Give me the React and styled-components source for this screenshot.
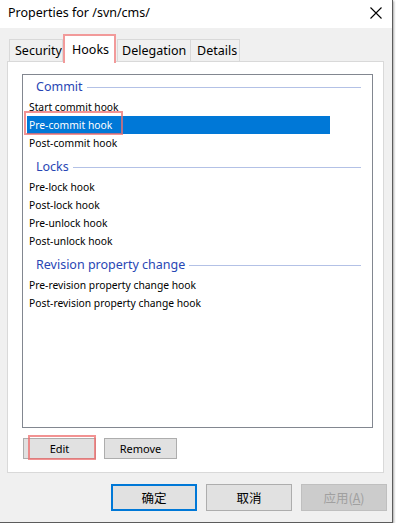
import React from 'react';
import styled, { createGlobalStyle } from 'styled-components';

const GlobalStyles = createGlobalStyle`
  html, body {
    margin: 0;
    padding: 0;
    background: #ffffff;
  }
  body {
    font-family: "Noto Sans", "Noto Sans CJK SC", sans-serif;
    color: #000;
  }
`;

const groups = [
  { title: 'Commit', items: ['Start commit hook', 'Pre-commit hook', 'Post-commit hook'] },
  { title: 'Locks', items: ['Pre-lock hook', 'Post-lock hook', 'Pre-unlock hook', 'Post-unlock hook'] },
  {
    title: 'Revision property change',
    items: ['Pre-revision property change hook', 'Post-revision property change hook'],
  },
];

// width, left offset and text inset of each tab (tabs overlap their neighbours a little)
const tabs = [
  { label: 'Security', w: 54, ml: 0, pl: 5 },
  { label: 'Hooks', w: 53, ml: 0, pl: 7, active: true },
  { label: 'Delegation', w: 74, ml: 1, pl: 4 },
  { label: 'Details', w: 50, ml: -1, pl: 6 },
];

export default function App() {
  return (
    <>
      <GlobalStyles />
      <Window>
        <TitleBar>
          <Title>Properties for /svn/cms/</Title>
          <Close>
            <svg width="12" height="12" viewBox="0 0 12 12">
              <path d="M0.5 0.5 L11.5 11.5 M11.5 0.5 L0.5 11.5" stroke="#000" strokeWidth="1.1" />
            </svg>
          </Close>
        </TitleBar>
        <Body>
          <TabRow>
            {tabs.map(t => (
              <Tab key={t.label} $active={t.active} $w={t.w} $ml={t.ml} $pl={t.pl}>{t.label}</Tab>
            ))}
          </TabRow>
          <Panel>
            <ListBox>
              {groups.map(g => (
                <Group key={g.title}>
                  <GroupHeader>
                    <span>{g.title}</span>
                    <HeaderLine />
                  </GroupHeader>
                  {g.items.map(item => (
                    <Row key={item} $selected={item === 'Pre-commit hook'}>
                      {item}
                      {item === 'Pre-commit hook' && <Mark $l={-3} $t={-5} $w={99} $h={24} />}
                    </Row>
                  ))}
                </Group>
              ))}
            </ListBox>
            <ButtonRow>
              <SmallButton>
                Edit
                <Mark $l={4} $t={-4} $w={68} $h={25} />
              </SmallButton>
              <SmallButton>Remove</SmallButton>
            </ButtonRow>
          </Panel>
          <Footer>
            <DialogButton $default>确定</DialogButton>
            <DialogButton>取消</DialogButton>
            <DialogButton $disabled>
              应用(<u>A</u>)
            </DialogButton>
          </Footer>
        </Body>
      </Window>
    </>
  );
}

const Window = styled.div`
  width: 392px;
  height: 522px;
  background: #f0f0f0;
  border-right: 1px solid #5c5c5c;
  border-bottom: 1px solid #5c5c5c;
  box-shadow: 1px 1px 2px rgba(0, 0, 0, 0.35);
  display: flex;
  flex-direction: column;
`;

const TitleBar = styled.div`
  height: 28px;
  background: #ffffff;
  display: flex;
  align-items: center;
  justify-content: space-between;
  padding: 0 8px;
`;

const Title = styled.div`
  font-size: 12.5px;
  line-height: 28px;
  margin-top: -2px;
`;

const Close = styled.div`
  width: 12px;
  height: 12px;
  margin-right: 2px;
  margin-top: -2px;
  display: flex;
`;

const Body = styled.div`
  padding: 6px 8px 0 7px;
  display: flex;
  flex-direction: column;
`;

const TabRow = styled.div`
  display: flex;
  align-items: flex-end;
  height: 28px;
  padding-left: 2px;
  position: relative;
  z-index: 1;
  margin-bottom: -1px;
`;

const Tab = styled.div`
  width: ${p => p.$w}px;
  margin-left: ${p => p.$ml}px;
  padding-left: ${p => p.$pl}px;
  font-size: 12.5px;
  height: ${p => (p.$active ? '29px' : '23px')};
  line-height: ${p => (p.$active ? '27px' : '22px')};
  box-sizing: border-box;
  background: ${p => (p.$active ? '#ffffff' : '#f0f0f0')};
  border: ${p => (p.$active ? '2px solid #f29a9a' : '1px solid #d9d9d9')};
  border-bottom: ${p => (p.$active ? 'none' : '1px solid #d9d9d9')};
  ${p => p.$active && 'margin-bottom: -1px;'}
  white-space: nowrap;
  overflow: hidden;
`;

const Panel = styled.div`
  width: 377px;
  height: 412px;
  box-sizing: border-box;
  background: #ffffff;
  border: 1px solid #d9d9d9;
  padding: 12px 0 0 14px;
  display: flex;
  flex-direction: column;
`;

const ListBox = styled.div`
  width: 351px;
  height: 354px;
  box-sizing: border-box;
  border: 1px solid #828790;
  display: flex;
  flex-direction: column;
  gap: 3px;
`;

const Group = styled.div`
  display: flex;
  flex-direction: column;
`;

const GroupHeader = styled.div`
  height: 23px;
  display: flex;
  align-items: center;
  gap: 4px;
  padding: 0 11px 0 13px;
  color: #2846b4;
  font-size: 12.5px;
  span {
    white-space: nowrap;
  }
`;

const HeaderLine = styled.div`
  flex: 1;
  height: 1px;
  background: #b3c1e6;
  margin-top: 1px;
`;

const Row = styled.div`
  position: relative;
  height: 18px;
  width: 303px;
  margin-left: 4px;
  padding-left: 2px;
  box-sizing: border-box;
  font-size: 10.3px;
  line-height: 19px;
  white-space: nowrap;
  background: ${p => (p.$selected ? '#0078d7' : 'transparent')};
  color: ${p => (p.$selected ? '#ffffff' : '#000000')};
`;

const Mark = styled.div`
  position: absolute;
  left: ${p => p.$l}px;
  top: ${p => p.$t}px;
  width: ${p => p.$w}px;
  height: ${p => p.$h}px;
  box-sizing: border-box;
  border: 2px solid rgba(238, 110, 110, 0.75);
  pointer-events: none;
`;

const ButtonRow = styled.div`
  display: flex;
  gap: 8px;
  margin-top: 10px;
  margin-left: 1px;
`;

const SmallButton = styled.div`
  position: relative;
  width: 73px;
  height: 21px;
  box-sizing: border-box;
  background: #e1e1e1;
  border: 1px solid #adadad;
  font-size: 11px;
  line-height: 19px;
  text-align: center;
`;

const Footer = styled.div`
  display: flex;
  justify-content: flex-end;
  gap: 9px;
  margin-top: 11px;
  margin-right: -3px;
`;

const DialogButton = styled.div`
  width: 86px;
  height: 27px;
  box-sizing: border-box;
  font-family: "Noto Sans CJK SC", sans-serif;
  font-size: 12.5px;
  line-height: ${p => (p.$default ? '23px' : '25px')};
  text-align: center;
  background: ${p => (p.$disabled ? '#cccccc' : '#e1e1e1')};
  color: ${p => (p.$disabled ? '#a0a0a0' : '#000000')};
  border: ${p => (p.$default ? '2px solid #0078d7' : p.$disabled ? '1px solid #bfbfbf' : '1px solid #adadad')};
  u {
    text-decoration-thickness: 1px;
  }
`;
